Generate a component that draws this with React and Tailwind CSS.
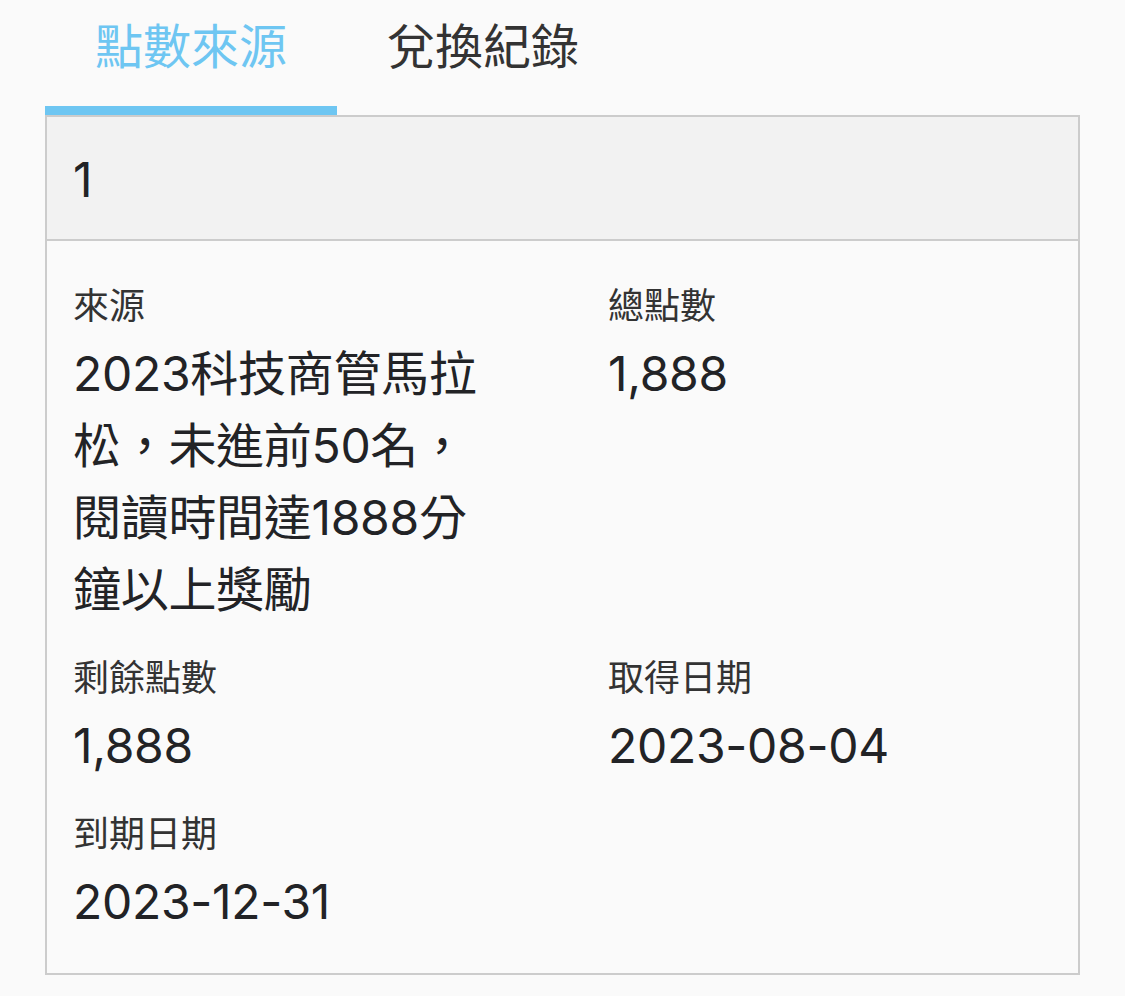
import { useState } from "react";

const fields = [
  { label: "來源", value: "2023科技商管馬拉松，未進前50名，閱讀時間達1888分鐘以上獎勵" },
  { label: "總點數", value: "1,888" },
  { label: "剩餘點數", value: "1,888" },
  { label: "取得日期", value: "2023-08-04" },
  { label: "到期日期", value: "2023-12-31" },
];

export default function App() {
  const [tab, setTab] = useState(0);
  const tabs = ["點數來源", "兌換紀錄"];

  return (
    <div
      className="min-h-[996px] w-[1125px] bg-[#fafafa] text-[#26282b]"
      style={{ fontFamily: 'Inter, "Noto Sans CJK TC", sans-serif' }}
    >
      <div className="px-[45px]">
        {/* Tabs */}
        <div className="flex">
          {tabs.map((t, i) => (
            <button
              key={t}
              onClick={() => setTab(i)}
              className="flex w-[292px] flex-col items-center"
            >
              <span
                className={`mt-[11px] h-[95px] text-[48px] leading-[72px] ${
                  tab === i ? "text-[#6ec6f2]" : "text-[#333333]"
                }`}
              >
                {t}
              </span>
              <span className={`h-[9px] w-full ${tab === i ? "bg-[#6ec6f2]" : "bg-transparent"}`}></span>
            </button>
          ))}
        </div>

        {/* Card */}
        <div className="border-2 border-[#cccccc]">
          <div className="border-b-2 border-[#cccccc] bg-[#f2f2f2] px-[26px] pb-[23px] pt-[27px] text-[48px] leading-[72px] text-[#222326]">
            1
          </div>
          <div className="grid grid-cols-[420px_1fr] gap-x-[115px] gap-y-[28px] px-[26px] pb-[35px] pt-[41px]">
            {fields.map((f) => (
              <div key={f.label}>
                <div className="text-[36px] leading-[48px] text-[#333333]">{f.label}</div>
                <div className="mt-[8px] text-[48px] leading-[72px] tracking-[-0.3px] text-[#222326]">{f.value}</div>
              </div>
            ))}
          </div>
        </div>
      </div>
    </div>
  );
}
